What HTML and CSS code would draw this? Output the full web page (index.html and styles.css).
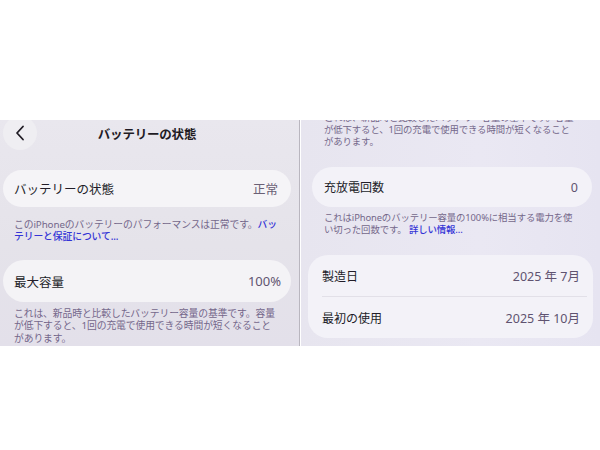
FILE: index.html
```html
<!DOCTYPE html>
<html lang="ja">
<head>
<meta charset="utf-8">
<link rel="stylesheet" href="styles.css">
</head>
<body>
<div class="stage">
  <section class="panel panel-left">
    <div class="nav">
      <div class="back">
        <svg width="10" height="16" viewBox="0 0 10 16"><path d="M8 1.5 L2 8 L8 14.5" fill="none" stroke="#1f1b24" stroke-width="1.8" stroke-linecap="round" stroke-linejoin="round"/></svg>
      </div>
      <div class="title">バッテリーの状態</div>
      <div></div>
    </div>
    <div class="card card-l1">
      <span class="label">バッテリーの状態</span>
      <span class="value">正常</span>
    </div>
    <p class="note note-l1">このiPhoneのバッテリーのパフォーマンスは正常です。<a class="link">バッ<br>テリーと保証について...</a></p>
    <div class="card card-l2">
      <span class="label">最大容量</span>
      <span class="value">100%</span>
    </div>
    <p class="note note-l2">これは、新品時と比較したバッテリー容量の基準です。容量<br>が低下すると、1回の充電で使用できる時間が短くなること<br>があります。</p>
  </section>
  <section class="panel panel-right">
    <p class="note note-r0">これは、新品時と比較したバッテリー容量の基準です。容量<br>が低下すると、1回の充電で使用できる時間が短くなること<br>があります。</p>
    <div class="card card-r1">
      <span class="label">充放電回数</span>
      <span class="value">0</span>
    </div>
    <p class="note note-r1">これはiPhoneのバッテリー容量の100%に相当する電力を使<br>い切った回数です。 <a class="link">詳しい情報...</a></p>
    <div class="card card-r2">
      <div class="row">
        <span class="label">製造日</span>
        <span class="value">2025 年 7月</span>
      </div>
      <div class="divider"></div>
      <div class="row">
        <span class="label">最初の使用</span>
        <span class="value">2025 年 10月</span>
      </div>
    </div>
  </section>
</div>
</body>
</html>
```
FILE: styles.css
```css
* { box-sizing: border-box; }
html, body { margin: 0; padding: 0; background: #ffffff; }
body {
  width: 600px;
  height: 450px;
  font-family: "Noto Sans", "Noto Sans CJK JP", sans-serif;
  color: #1f1b24;
}
.stage {
  display: flex;
  gap: 1px;
  padding-top: 120px;
  height: 346px;
}
.panel {
  height: 226px;
  overflow: hidden;
  display: flex;
  flex-direction: column;
}
.panel-left {
  width: 300px;
  padding: 0 8px 0 3px;
  background: linear-gradient(180deg, #e9e7ee 0%, #e5e3ea 55%, #e3e0ea 100%);
  border-right: 1px solid #b9b6bf;
}
.panel-right {
  width: 299px;
  background: linear-gradient(90deg, #e7e5ef 0%, #eae8f3 60%, #e6e4f1 100%);
}
.nav {
  display: grid;
  grid-template-columns: 34px 1fr 34px;
  align-items: center;
  height: 34px;
  margin-top: -4px;
}
.back {
  width: 34px;
  height: 34px;
  border-radius: 50%;
  background: #efeef2;
  display: flex;
  align-items: center;
  justify-content: center;
}
.back svg { margin-left: -1px; }
.title {
  text-align: center;
  font-size: 12.5px;
  font-weight: 700;
  letter-spacing: -0.2px;
}
.card {
  background: #f5f4f7;
  border-radius: 21px;
  display: flex;
  align-items: center;
  justify-content: space-between;
}
.label { font-size: 12.5px; font-weight: 400; color: #221d28; }
.value { font-size: 12.5px; color: #6a6075; }
.card-l1 { height: 40px; margin-top: 20px; padding: 0 13px 0 11px; }
.card-l2 { height: 44px; margin-top: 17px; padding: 0 10px 0 11px; background: #f4f3f6; }
.card-l2 .value { font-size: 13px; color: #5f5370; }
.note {
  margin: 0;
  font-size: 9.8px;
  color: #74678a;
  white-space: nowrap;
  letter-spacing: -0.1px;
}
.link { color: #3434d6; font-weight: 500; }
.note-l1 { margin-top: 12px; padding-left: 11px; line-height: 12px; }
.note-l2 { margin-top: 6px; padding-left: 11px; line-height: 12.8px; }
.note-r0 { margin-top: -8px; padding-left: 23px; line-height: 12px; font-size: 9.4px; }
.card-r1 {
  height: 40px;
  margin: 19px 8px 0 11px;
  padding: 0 14px 0 12px;
  background: #f3f2f8;
}
.card-r1 .label, .card-r2 .label { font-size: 12px; }
.card-r1 .value, .card-r2 .value { font-size: 12.5px; color: #5f5370; }
.note-r1 { margin-top: 5px; padding-left: 23px; line-height: 12px; font-size: 9.4px; }
.card-r2 {
  display: block;
  margin: 19px 7px 0 7px;
  height: 83px;
  background: #f3f2f8;
  border-radius: 20px;
}
.row {
  height: 41px;
  display: flex;
  align-items: center;
  justify-content: space-between;
  padding: 0 13px 0 14px;
}
.divider {
  height: 1px;
  margin: 0 6px 0 14px;
  background: #e2e0e8;
}
```
